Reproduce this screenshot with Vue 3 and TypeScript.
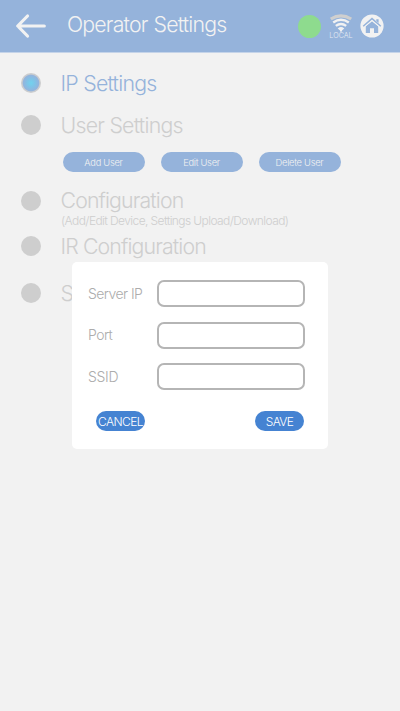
<script setup lang="ts">
import { ref } from 'vue'

interface MenuItem {
  key: string
  label: string
  note?: string
  actions?: string[]
}

interface Field {
  key: string
  label: string
}

const items: MenuItem[] = [
  { key: 'ip', label: 'IP Settings' },
  { key: 'user', label: 'User Settings', actions: ['Add User', 'Edit User', 'Delete User'] },
  { key: 'config', label: 'Configuration', note: '(Add/Edit Device, Settings Upload/Download)' },
  { key: 'ir', label: 'IR Configuration' },
  { key: 'last', label: 'S' },
]

const fields: Field[] = [
  { key: 'server', label: 'Server IP' },
  { key: 'port', label: 'Port' },
  { key: 'ssid', label: 'SSID' },
]

const selected = ref('ip')
const values = ref<Record<string, string>>({ server: '', port: '', ssid: '' })
</script>

<template>
  <div class="screen">
    <header class="bar">
      <svg class="back" width="32" height="26" viewBox="0 0 32 26">
        <path d="M12.5 3 L2.7 13 L12.5 23 M3 13 H29.3" />
      </svg>
      <h1 class="title">Operator Settings</h1>
      <span class="status"></span>
      <div class="wifi">
        <svg width="24" height="19" viewBox="0 0 24 19">
          <path class="outer" d="M1.8 5 Q12 -1.4 22.2 5" />
          <path d="M4.2 8.4 Q12 3 19.8 8.4" />
          <path d="M6.8 11.9 Q12 8 17.2 11.9" />
          <path class="tip" d="M8.7 14.4 Q12 11.8 15.3 14.4 L13.2 16.2 L12 18.6 L10.8 16.2 Z" />
        </svg>
        <span class="local">LOCAL</span>
      </div>
      <svg class="home" width="24" height="24" viewBox="0 0 24 24">
        <circle cx="12" cy="12" r="11.6" />
        <path class="roof" d="M3.2 12.3 L12 4.6 L20.8 12.3" />
        <path class="wall" d="M16.3 5.2 H18.6 V9 L16.3 7 Z M5.8 12.3 L12 7.2 L18.2 12.3 V19 H14 V14.3 H10 V19 H5.8 Z" />
        <path class="inner" d="M5.2 12.4 L12 6.6 L18.8 12.4" />
      </svg>
    </header>

    <main class="menu">
      <section v-for="item in items" :key="item.key" class="item" :class="item.key">
        <div class="row" :class="{ active: item.key === selected }" @click="selected = item.key">
          <span class="dot"></span>
          <span class="label">{{ item.label }}</span>
        </div>
        <p v-if="item.note" class="note">{{ item.note }}</p>
        <div v-if="item.actions" class="actions">
          <button v-for="a in item.actions" :key="a" class="action">{{ a }}</button>
        </div>
      </section>
    </main>

    <form class="dialog" @submit.prevent>
      <label v-for="f in fields" :key="f.key" class="field">
        <span class="name" :class="f.key">{{ f.label }}</span>
        <input v-model="values[f.key]" type="text" />
      </label>
      <div class="buttons">
        <button type="button">CANCEL</button>
        <button type="submit" class="save">SAVE</button>
      </div>
    </form>
  </div>
</template>

<style>
body {
  background: #f2f2f2;
}
</style>

<style scoped>
.screen {
  position: relative;
  box-sizing: border-box;
  height: 711px;
  overflow: hidden;
  background: #f2f2f2;
  font-family: Inter, "Liberation Sans", sans-serif;
  font-weight: 350;
}
button {
  padding: 0;
  border: 0;
  font-family: inherit;
  font-weight: 350;
  white-space: nowrap;
}
.bar {
  display: flex;
  align-items: center;
  box-sizing: border-box;
  height: 53px;
  padding: 0 16px 0 15px;
  border-bottom: 1px solid #c5d4e9;
  background: #95b3db;
}
.back {
  fill: none;
  stroke: #f2f2f2;
  stroke-width: 3.2;
  stroke-linecap: round;
  stroke-linejoin: round;
}
.title {
  width: 231px;
  margin: 0 0 4px 20px;
  color: #f2f2f2;
  font-size: 21.3px;
  font-weight: 350;
  line-height: 28px;
  letter-spacing: -0.82px;
  word-spacing: 0.8px;
  white-space: nowrap;
}
.status {
  width: 23px;
  height: 23px;
  border-radius: 50%;
  background: #8edb8e;
}
.wifi {
  display: flex;
  flex-direction: column;
  align-items: center;
  width: 24px;
  margin: 2px 7px 0 8px;
}
.wifi path {
  fill: none;
  stroke: #f2f2f2;
  stroke-width: 2.4;
}
.wifi .outer {
  stroke: #cfcfcf;
  stroke-width: 3.2;
}
.wifi .tip {
  fill: #f2f2f2;
  stroke: none;
}
.local {
  margin-top: -1px;
  color: #e4eaf2;
  font-size: 7.2px;
  line-height: 8px;
}
.home {
  margin-right: -0.5px;
}
.home circle {
  fill: #f2f2f2;
}
.home .roof {
  fill: none;
  stroke: #95b3db;
  stroke-width: 1.5;
}
.home .inner {
  fill: none;
  stroke: #f2f2f2;
  stroke-width: 0.9;
}
.home .wall {
  fill: #95b3db;
}
.menu {
  padding: 17.4px 0 0 21px;
}
.item {
  height: 41.5px;
}
.item.user {
  height: 76.2px;
}
.item.config {
  height: 45px;
}
.item.ir {
  height: 47px;
}
.row {
  display: flex;
  align-items: center;
  gap: 19.5px;
  height: 27px;
  color: #cecece;
}
.dot {
  box-sizing: border-box;
  width: 20px;
  height: 20px;
  margin-bottom: 1px;
  border-radius: 50%;
  background: #cecece;
}
.active .dot {
  background: radial-gradient(circle closest-side, #72d2ee 0%, #7fc3e7 40%, #93b4dd 78%, #c9cccf 88%, #cecece 100%);
}
.label {
  font-size: 21.3px;
  line-height: 27px;
  letter-spacing: -0.87px;
}
.config .label {
  margin-bottom: 2px;
}
.ip .label,
.user .label {
  letter-spacing: -0.75px;
}
.active {
  color: #95b3db;
}
.note {
  margin: -2px 0 0 40px;
  color: #cecece;
  font-size: 12px;
  line-height: 16px;
  letter-spacing: -0.59px;
}
.actions {
  display: flex;
  gap: 16px;
  margin: 13.1px 0 0 41.5px;
}
.action {
  width: 82px;
  height: 20px;
  padding-top: 1px;
  border-radius: 10px;
  background: #95b3db;
  color: #f2f2f2;
  font-size: 9.3px;
  line-height: 19px;
  letter-spacing: -0.26px;
}
.dialog {
  position: absolute;
  top: 262px;
  left: 72px;
  box-sizing: border-box;
  width: 256px;
  height: 187px;
  padding: 18px 23px 0 16px;
  border-radius: 5px;
  background: #fff;
}
.field {
  display: flex;
  align-items: center;
  height: 27px;
  margin-bottom: 14.6px;
}
.name {
  width: 69px;
  color: #acacac;
  font-size: 14px;
  letter-spacing: -0.56px;
}
.name.port {
  padding-bottom: 1px;
}
.name.ssid {
  letter-spacing: -0.3px;
}
input {
  box-sizing: border-box;
  width: 148px;
  height: 27px;
  padding: 0 8px;
  border: 2px solid #b5b5b5;
  border-radius: 7px;
  outline: 0;
  background: #fff;
  font: inherit;
}
.buttons {
  display: flex;
  justify-content: space-between;
  padding: 6.2px 1px 0 8px;
}
.buttons button {
  width: 49px;
  height: 20px;
  padding-top: 1px;
  border-radius: 10px;
  background: #4583d2;
  color: #fff;
  font-size: 12px;
  line-height: 19px;
  letter-spacing: -0.6px;
}
</style>
